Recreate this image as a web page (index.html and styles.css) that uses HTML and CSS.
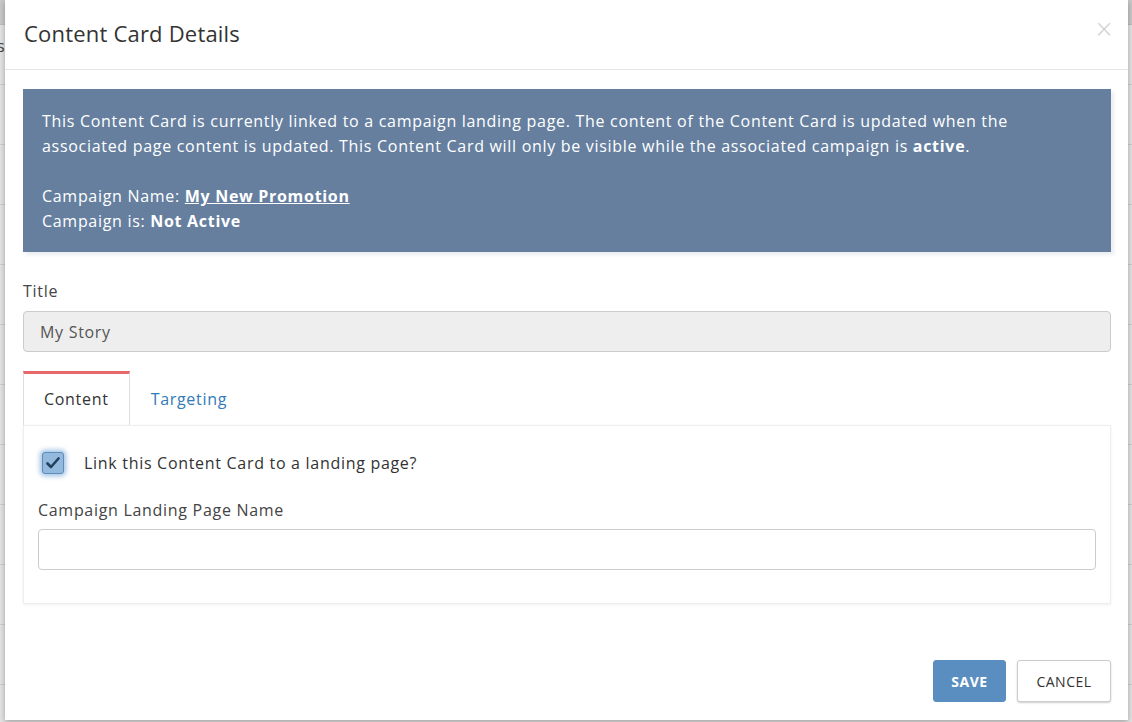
FILE: index.html
```html
<!DOCTYPE html>
<html lang="en">
<head>
    <meta charset="UTF-8">
    <title>Content Card Details</title>
    <link rel="stylesheet" href="styles.css">
</head>
<body>
    <div class="page">
        <div class="page-bar"></div>
        <div class="page-row"><span>s</span></div>
        <div class="page-row"></div>
        <div class="page-row"></div>
        <div class="page-row"></div>
        <div class="page-row"></div>
        <div class="page-row"></div>
        <div class="page-row"></div>
        <div class="page-row"></div>
        <div class="page-row"></div>
        <div class="page-row"></div>
        <div class="page-row"></div>
    </div>

    <div class="modal">
        <div class="modal-header">
            <h4 class="modal-title">Content Card Details</h4>
            <button class="close" type="button">&times;</button>
        </div>
        <div class="modal-body">
            <div class="alert">
                <p>This Content Card is currently linked to a campaign landing page. The content of the Content Card is updated when the associated page content is updated. This Content Card will only be visible while the associated campaign is <b>active</b>.</p>
                <p>Campaign Name: <a href="#">My New Promotion</a><br>Campaign is: <b>Not Active</b></p>
            </div>

            <label class="field-label">Title</label>
            <input class="form-control" type="text" value="My Story" disabled>

            <ul class="tabs">
                <li class="tab active">Content</li>
                <li class="tab">Targeting</li>
            </ul>
            <div class="tab-panel">
                <div class="check-row">
                    <span class="checkbox">
                        <svg width="14" height="12" viewBox="0 0 14 12"><path d="M1.5 6.5 L5 10 L12.5 1.5" fill="none" stroke="#24405e" stroke-width="2.6" stroke-linecap="round" stroke-linejoin="round"/></svg>
                    </span>
                    <span>Link this Content Card to a landing page?</span>
                </div>
                <label class="field-label">Campaign Landing Page Name</label>
                <input class="form-control white" type="text">
            </div>
        </div>
        <div class="modal-footer">
            <button class="btn btn-primary" type="button">Save</button>
            <button class="btn btn-default" type="button">Cancel</button>
        </div>
    </div>
</body>
</html>
```
FILE: styles.css
```css
* { box-sizing: border-box; }
body { margin: 0; font-family: "Open Sans", "Liberation Sans", sans-serif; font-size: 16px; letter-spacing: 0.7px; color: #333; background: #e9e9e9; height: 722px; overflow: hidden; }

.page { background: #e4e4e4; height: 722px; }
.page-bar { height: 25px; background: #c9c9c9; border-bottom: 1px solid #bdbdbd; }
.page-row { height: 60px; border-bottom: 1px solid #cfcfcf; font-size: 16px; color: #444; padding-top: 10px; }
.page-row span { margin-left: -3px; }

.modal { position: absolute; left: 5px; top: 0; width: 1123px; height: 720px; background: #fff; box-shadow: 0 2px 6px rgba(0,0,0,.3); display: flex; flex-direction: column; }
.modal-header { height: 70px; padding: 17px 19px 0; border-bottom: 1px solid #e5e5e5; display: flex; justify-content: space-between; }
.modal-title { margin: 0; font-size: 22px; font-weight: 400; line-height: 32px; letter-spacing: 0.2px; color: #333; }
.close { border: 0; background: none; font-family: "DejaVu Sans", sans-serif; font-weight: 300; font-size: 24px; color: #cfcfcf; padding: 0; margin: -28px -5px 0 0; line-height: 32px; cursor: pointer; }

.modal-body { padding: 19px 17px 0 18px; display: flex; flex-direction: column; }
.alert { background: #667f9f; color: #fff; padding: 20px 19px 18px; line-height: 25px; box-shadow: 3px 3px 3px rgba(220,225,232,.6); }
.alert p { margin: 0; }
.alert p + p { margin-top: 25px; }
.alert a { color: #fff; font-weight: 700; }

.field-label { display: block; color: #444; line-height: 22px; margin: 28px 0 9px; }
.form-control { display: block; width: 100%; height: 41px; border: 1px solid #ccc; border-radius: 4px; background: #eee; padding: 0 16px; font-family: inherit; font-size: 16px; letter-spacing: 0.7px; color: #555; }
.form-control.white { background: #fff; }

.tabs { list-style: none; margin: 19px 0 0; padding: 0; display: flex; }
.tab { padding: 14px 20px 15px; line-height: 22px; color: #337ab7; border-top: 3px solid transparent; margin-right: 1px; }
.tab.active { color: #333; border-top-color: #e8676b; border-left: 1px solid #ddd; border-right: 1px solid #ddd; background: #fff; }

.tab-panel { border: 1px solid #eee; padding: 26px 14px 33px; box-shadow: 0 1px 3px rgba(0,0,0,.06); }
.tab-panel .field-label { margin: 0 0 8px; }
.check-row { display: flex; align-items: center; gap: 20px; margin-left: 4px; color: #333; line-height: 22px; margin-bottom: 25px; }
.checkbox { width: 22px; height: 22px; border-radius: 3px; background: #93b9dd; border: 1px solid #5f8cb8; box-shadow: 0 0 5px 2px rgba(90,150,210,.6); display: flex; align-items: center; justify-content: center; }

.modal-footer { margin-top: auto; padding: 0 17px 18px; display: flex; justify-content: flex-end; gap: 11px; }
.btn { height: 42px; border-radius: 3px; font-family: inherit; font-size: 14px; letter-spacing: 0.5px; text-transform: uppercase; cursor: pointer; }
.btn-primary { background: #5a8ec0; border: 1px solid #5a8ec0; color: #fff; font-weight: 700; width: 73px; padding: 0; }
.btn-default { background: #fff; border: 1px solid #ccc; color: #333; box-shadow: 0 1px 2px rgba(0,0,0,.2); width: 94px; padding: 0; }
```
